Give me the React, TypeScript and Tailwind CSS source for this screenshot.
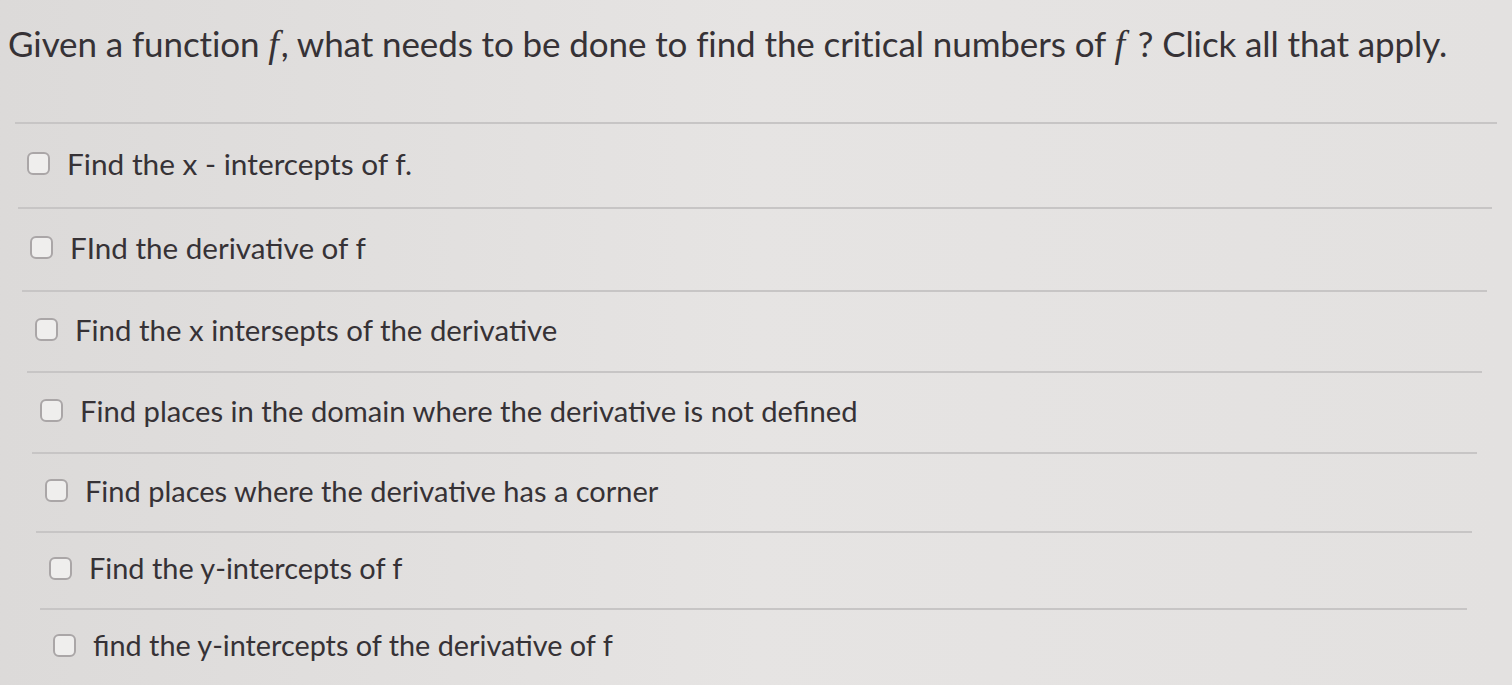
import React from 'react';

const options = [
  { text: 'Find the x - intercepts of f.', row: 'ml-[15px] mr-[15px] h-[85px] pl-[12px]', size: 'text-[29.8px]' },
  { text: 'FInd the derivative of f', row: 'ml-[18px] mr-[20px] h-[83px] pl-[12px]', size: 'text-[29.6px]' },
  { text: 'Find the x intersepts of the derivative', row: 'ml-[22px] mr-[25px] h-[81px] pl-[13px]', size: 'text-[29.4px]' },
  { text: 'Find places in the domain where the derivative is not defined', row: 'ml-[27px] mr-[30px] h-[81px] pl-[13px]', size: 'text-[29.2px]' },
  { text: 'Find places where the derivative has a corner', row: 'ml-[32px] mr-[35px] h-[79px] pl-[13px]', size: 'text-[29px]' },
  { text: 'Find the y-intercepts of f', row: 'ml-[36px] mr-[40px] h-[77px] pl-[13px]', size: 'text-[28.9px]' },
  { text: 'find the y-intercepts of the derivative of f', row: 'ml-[40px] mr-[45px] h-[77px] pl-[13px]', size: 'text-[28.8px]' },
];

export default function App() {
  return (
    <div className="h-[685px] w-[1512px] overflow-hidden bg-gradient-to-r from-[#dcdad9] via-[#e6e4e3] to-[#e3e1e0] text-[#363236] [font-family:Lato,'Open_Sans',sans-serif]">
      {/* Question */}
      <div className="h-[122px] pl-[8px] pt-[18px]">
        <h1 className="text-[35px] leading-[50px] tracking-[-0.1px]">
          Given a function{' '}
          <span className="mr-[2px] [font-family:'Liberation_Serif',serif] text-[38px] italic">f</span>, what needs to be
          done to find the critical numbers of{' '}
          <span className="mr-[4px] [font-family:'Liberation_Serif',serif] text-[38px] italic">f</span> ? Click all that
          apply.
        </h1>
      </div>

      {/* Choices */}
      <div className="flex flex-col">
        {options.map((o) => (
          <div key={o.text} className={`flex items-center gap-[17px] border-t-2 border-[#c7c5c5] pb-[4px] ${o.row}`}>
            <span className="h-[23px] w-[23px] shrink-0 rounded-[6px] border-2 border-[#aaa6a7] bg-[#efeeed]" />
            <span className={`leading-none ${o.size}`}>{o.text}</span>
          </div>
        ))}
      </div>
    </div>
  );
}
